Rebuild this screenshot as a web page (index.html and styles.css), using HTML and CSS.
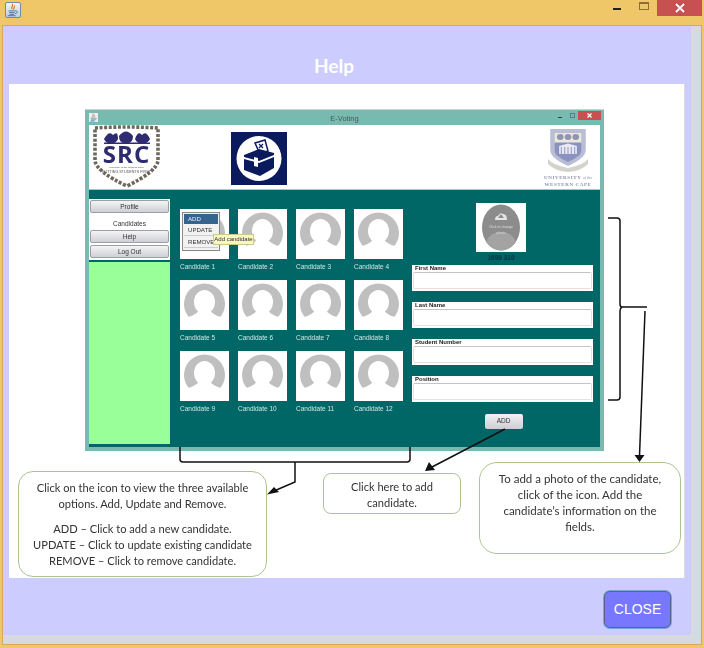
FILE: index.html
```html
<!DOCTYPE html>
<html lang="en">
<head>
<meta charset="utf-8">
<title>Help</title>
<link rel="stylesheet" href="styles.css">
</head>
<body>
<svg class="defs" width="0" height="0" aria-hidden="true">
  <defs>
    <symbol id="person" viewBox="0 0 49 50">
      <circle cx="24.5" cy="24" r="20.5" fill="#bfbfbf"/>
      <ellipse cx="24.5" cy="22" rx="10.500" ry="12" fill="#fff"/>
      <path d="M5 38 C12 36 17 34 19 30 L30 30 C32 34 37 36 44 38 L44 50 L5 50 Z" fill="#fff"/>
    </symbol>
    <symbol id="java" viewBox="0 0 16 16">
      <path d="M7 1 C9 3 5 5 7 7 M9.500 3 C10.500 5 8 6 9 7.500" fill="none" stroke="#e0672a" stroke-width="1.300"/>
      <path d="M3 9 H10 M3.500 11 H10 M4 13 H9 M2 14.500 H11 M10 9 C14 8 14 12 10 12" fill="none" stroke="#3d6a96" stroke-width="1"/>
    </symbol>
  </defs>
</svg>

<header class="titlebar">
  <span class="java-icon"><svg width="14" height="14"><use href="#java"/></svg></span>
  <div class="controls">
    <span class="ctl-min"></span>
    <span class="ctl-max"></span>
    <span class="ctl-close"><svg width="10" height="10" viewBox="0 0 10 10"><path d="M1 1 L9 9 M9 1 L1 9" stroke="#fff" stroke-width="1.800"/></svg></span>
  </div>
</header>

<main class="window">
  <div class="pane">
    <h1 class="heading">Help</h1>
    <section class="image">
      <div class="app">
        <div class="app-titlebar">
          <span class="app-java"><svg width="9" height="9"><use href="#java"/></svg></span>
          <span class="app-title">E-Voting</span>
          <span class="app-min"></span>
          <span class="app-max"></span>
          <span class="app-close"><svg width="5" height="5" viewBox="0 0 10 10"><path d="M1 1 L9 9 M9 1 L1 9" stroke="#fff" stroke-width="2.400"/></svg></span>
        </div>
        <div class="app-header">
          <svg class="logo-src" width="69" height="63" viewBox="0 0 69 63">
            <path d="M3 3 Q34 1 66 3 L66 36 Q64 47 35 61 Q5 47 3 36 Z" fill="#fff" stroke="#6d675c" stroke-width="3.600" stroke-dasharray="3 1.600"/>
            <g fill="#2e2b70">
              <path d="M12 14 Q17 5 21 10 Q26 5 26 14 Q24 19 19 18 Q14 19 12 14 Z"/>
              <path d="M27 11 Q34 2 41 11 Q41 19 34 18 Q27 19 27 11 Z"/>
              <path d="M43 14 Q46 5 50 10 Q54 5 58 14 Q56 19 50 18 Q45 19 43 14 Z"/>
              <rect x="12" y="17.500" width="46" height="1.500"/>
            </g>
            <text class="src-text" x="34.500" y="38" text-anchor="middle">SRC</text>
            <text class="src-small" x="34.500" y="43" text-anchor="middle">University of the Western Cape</text>
            <text class="src-motto" x="34.500" y="47.500" text-anchor="middle">PUTTING STUDENTS FIRST</text>
          </svg>
          <svg class="logo-ballot" width="56" height="53" viewBox="0 0 56 53">
            <rect width="56" height="53" fill="#0a1a5c"/>
            <circle cx="28" cy="26.500" r="22.500" fill="#fff"/>
            <path d="M24 11 L34 8 L37 19 L29 22 Z" fill="#fff" stroke="#0a1a5c" stroke-width="1.500"/>
            <path d="M28 12 L32 16 M32 12 L28 16" stroke="#0a1a5c" stroke-width="1.200"/>
            <path d="M13 23 L28 17 L43 21 L43 23 L28 29 L13 25 Z" fill="#0a1a5c"/>
            <path d="M13 27 L28 31 L43 25 L43 36 L29 44 L13 38 Z" fill="#0a1a5c"/>
            <path d="M23 25 L27 26 L27 35 L23 34 Z" fill="#fff"/>
          </svg>
          <div class="logo-uwc">
            <svg class="uwc-crest" width="40" height="44" viewBox="0 0 36 44" preserveAspectRatio="none">
              <path d="M2 1 H34 V22 Q34 30 18 38 Q2 30 2 22 Z" fill="#b9bdd6"/>
              <rect x="6" y="5" width="24" height="9" fill="#ebe8da"/>
              <circle cx="11" cy="9" r="3" fill="#8f94b3"/>
              <circle cx="18" cy="9" r="3" fill="#8f94b3"/>
              <circle cx="25" cy="9" r="3" fill="#8f94b3"/>
              <path d="M6 15 H30 V23 Q30 28 18 34 Q6 28 6 23 Z" fill="#8a93bf"/>
              <path d="M10 18 L18 15.500 L26 18 V26 H10 Z" fill="#e8e9f2"/>
              <path d="M12 19 V26 M15 19 V26 M18 19 V26 M21 19 V26 M24 19 V26" stroke="#98a0c4"/>
              <path d="M0 31 Q4 37 18 40 Q32 37 36 31 L36 36 Q30 43 18 44 Q6 43 0 36 Z" fill="#d2d3cd"/>
            </svg>
            <span class="uwc-line">UNIVERSITY <i>of the</i></span>
            <span class="uwc-line">WESTERN CAPE</span>
          </div>
        </div>
        <div class="app-body">
          <aside class="sidebar">
            <nav class="menu">
              <span class="menu-btn">Profile</span>
              <span class="menu-active">Candidates</span>
              <span class="menu-btn">Help</span>
              <span class="menu-btn">Log Out</span>
            </nav>
            <div class="side-fill"></div>
          </aside>
          <div class="grid">
            <figure class="cand">
              <div class="thumb"><svg width="49" height="50"><use href="#person"/></svg>
                <div class="popup"><span class="pop-on">ADD</span><span class="pop-item">UPDATE</span><span class="pop-item">REMOVE</span></div>
                <span class="tooltip">Add candidate</span>
              </div>
              <figcaption>Candidate 1</figcaption>
            </figure>
            <figure class="cand"><div class="thumb"><svg width="49" height="50"><use href="#person"/></svg></div><figcaption>Candidate 2</figcaption></figure>
            <figure class="cand"><div class="thumb"><svg width="49" height="50"><use href="#person"/></svg></div><figcaption>Candidate 3</figcaption></figure>
            <figure class="cand"><div class="thumb"><svg width="49" height="50"><use href="#person"/></svg></div><figcaption>Candidate 4</figcaption></figure>
            <figure class="cand"><div class="thumb"><svg width="49" height="50"><use href="#person"/></svg></div><figcaption>Candidate 5</figcaption></figure>
            <figure class="cand"><div class="thumb"><svg width="49" height="50"><use href="#person"/></svg></div><figcaption>Candidate 6</figcaption></figure>
            <figure class="cand"><div class="thumb"><svg width="49" height="50"><use href="#person"/></svg></div><figcaption>Canddate 7</figcaption></figure>
            <figure class="cand"><div class="thumb"><svg width="49" height="50"><use href="#person"/></svg></div><figcaption>Candidate 8</figcaption></figure>
            <figure class="cand"><div class="thumb"><svg width="49" height="50"><use href="#person"/></svg></div><figcaption>Candidate 9</figcaption></figure>
            <figure class="cand"><div class="thumb"><svg width="49" height="50"><use href="#person"/></svg></div><figcaption>Candidate 10</figcaption></figure>
            <figure class="cand"><div class="thumb"><svg width="49" height="50"><use href="#person"/></svg></div><figcaption>Candidate 11</figcaption></figure>
            <figure class="cand"><div class="thumb"><svg width="49" height="50"><use href="#person"/></svg></div><figcaption>Candidate 12</figcaption></figure>
          </div>
          <form class="form">
            <div class="photo">
              <svg width="50" height="49" viewBox="0 0 50 49">
                <ellipse cx="25" cy="24.500" rx="19" ry="23" fill="#8c8c8c"/>
                <path d="M10 39 Q14 29 25 29 Q36 29 40 39 Q33 47.500 25 47.500 Q17 47.500 10 39 Z" fill="#a3a3a3"/>
                <path d="M19 17 Q19 13 22 13 Q24 9 27 11 Q31 11 31 17 Z" fill="#e6e6e6"/>
                <path d="M25 11 L22 15 H28 Z" fill="#8c8c8c"/>
                <text class="photo-text" x="25" y="25" text-anchor="middle">Click to change</text>
                <text class="photo-text" x="25" y="31" text-anchor="middle">photo</text>
              </svg>
            </div>
            <div class="photo-id">1699 310</div>
            <label class="field"><span>First Name</span><i></i></label>
            <label class="field"><span>Last Name</span><i></i></label>
            <label class="field"><span>Student Number</span><i></i></label>
            <label class="field"><span>Position</span><i></i></label>
            <span class="add-btn">ADD</span>
          </form>
        </div>
      </div>

      <div class="callouts">
        <div class="callout c1">
          <p>Click on the icon to view the three available options. Add, Update and Remove.</p>
          <p>ADD – Click to add a new candidate.<br>UPDATE – Click to update existing candidate<br>REMOVE – Click to remove candidate.</p>
        </div>
        <div class="callout c2"><p>Click here to add candidate.</p></div>
        <div class="callout c3"><p>To add a photo of the candidate, click of the icon. Add the candidate’s information on the fields.</p></div>
      </div>

      <svg class="arrows" width="676" height="494" viewBox="0 0 676 494">
        <g transform="translate(-9 -84)" fill="none" stroke="#111" stroke-width="1.500">
          <path d="M608 218 H617 Q620 218 620 221 V304 Q620 307 622 307 H647 M622 307 Q620 308 620 311 V397 Q620 400 617 400 H608"/>
          <path d="M645 311 L639.500 456"/>
          <path d="M180 447 V459 Q180 462 183 462 H407 Q410 462 410 459 V447"/>
          <path d="M295 462 V482 L274 491"/>
          <path d="M505 429 L432 467"/>
          <path d="M634.500 455 H644.500 L639.500 462 Z M274 487 L279 492 L267 494.500 Z M429 462 L435 470 L425 471 Z" fill="#111" stroke="none"/>
        </g>
      </svg>
    </section>
    <footer class="footer"><span class="close-btn">CLOSE</span></footer>
  </div>
</main>
</body>
</html>
```

FILE: styles.css
```css
* { box-sizing: border-box; }
html, body { margin: 0; padding: 0; }
body {
  width: 704px;
  height: 648px;
  overflow: hidden;
  background: #efc668;
  font-family: "Liberation Sans", Arial, sans-serif;
}
.defs { position: absolute; }

/* outer window frame */
.titlebar {
  height: 25px;
  display: flex;
  justify-content: space-between;
  align-items: flex-start;
}
.java-icon {
  margin: 2px 0 0 5px;
  width: 16px;
  height: 16px;
  display: flex;
  align-items: center;
  justify-content: center;
  background: linear-gradient(#f2f5f8, #b9cfe2);
  border: 1px solid #6f8ba5;
  border-radius: 2px;
}
.controls { display: flex; align-items: flex-start; margin-right: 2px; }
.ctl-min { width: 8px; height: 2px; background: #222; margin: 8px 18px 0 0; }
.ctl-max { width: 10px; height: 8px; border: 1px solid #8a6f3e; border-top-width: 2px; margin: 2px 8px 0 0; }
.ctl-close {
  width: 45px;
  height: 16px;
  background: #c75050;
  display: flex;
  align-items: center;
  justify-content: center;
}
.window {
  height: 620px;
  margin: 0 2px 0 2px;
  padding: 1px 10px 10px 1px;
  width: 700px;
  border: 1px solid #d6a95a;
  border-width: 1px 1px 1px 0;
  background: #d6d9e0;
  position: relative;
}
.window::before {
  content: "";
  position: absolute;
  left: 0;
  top: 0;
  bottom: 0;
  width: 1px;
  background: #d6a95a;
}
.pane {
  width: 688px;
  height: 609px;
  margin-top: -1px;
  background: #ccccff;
}
.heading {
  margin: 0;
  height: 58px;
  padding-top: 28px;
  text-align: center;
  color: #fff;
  font: bold 19px/24px "Lato", "Noto Sans", sans-serif;
  transform: translateX(-13px);
}

/* the help picture */
.image {
  position: relative;
  width: 676px;
  height: 494px;
  margin-left: 6px;
  padding-top: 25px;
  background: #fff;
  border-right: 1px solid #dcdce0;
}
.app {
  position: relative;
  margin: 0 0 0 76px;
  width: 519px;
  height: 342px;
  background: #78bab0;
  border-top: 1px solid #c9d4d2;
  padding: 0 4px 4px;
  filter: blur(0.35px);
}
.app-titlebar {
  height: 15px;
  margin: 0 -4px;
  display: flex;
  align-items: flex-start;
  position: relative;
  color: #40605c;
}
.app-java { margin: 3px 0 0 4px; width: 9px; height: 9px; background: #e9eef2; display: flex; }
.app-title { position: absolute; left: 0; right: 0; top: 4px; text-align: center; font-size: 7.500px; line-height: 9px; }
.app-min { margin: 7px 0 0 auto; width: 4px; height: 1px; background: #245; }
.app-max { margin: 3px 0 0 8px; width: 5px; height: 5px; border: 1px solid #557f8c; }
.app-close {
  margin: 1px 3px 0 3px;
  width: 23px;
  height: 9px;
  background: #c75050;
  display: flex;
  align-items: center;
  justify-content: center;
}
.app-header {
  height: 65px;
  background: #fff;
  display: flex;
  align-items: flex-start;
  position: relative;
  border-bottom: 1px solid #9cc;
}
.logo-src { margin: 0 0 0 3px; flex: none; }
.logo-ballot { margin: 7px 0 0 70px; flex: none; }
.src-text { font: bold 24px "Open Sans", sans-serif; fill: #2e2b70; letter-spacing: 1px; }
.src-small { font: 2.500px "Liberation Sans", sans-serif; fill: #444; }
.src-motto { font: 3.700px "Liberation Sans", sans-serif; fill: #555; }
.logo-uwc {
  margin: 3px 6px 0 auto;
  width: 52px;
  display: flex;
  flex-direction: column;
  align-items: center;
}
.uwc-crest { display: block; margin-bottom: 2px; }
.uwc-line {
  font: bold 5px/7px "Liberation Serif", serif;
  letter-spacing: .6px;
  white-space: nowrap;
  color: #8d91aa;
}
.uwc-line i { font-weight: normal; font-size: 4px; letter-spacing: 0; }
.app-body {
  height: 257px;
  background: #006666;
  display: flex;
  padding: 9px 0 3px;
}
.sidebar { width: 81px; display: flex; flex-direction: column; gap: 2px; flex: none; }
.menu {
  height: 61px;
  background: #fff;
  padding: 1px;
  display: flex;
  flex-direction: column;
  font-size: 6.500px;
  color: #333;
  text-align: center;
}
.menu-btn {
  height: 13px;
  margin-bottom: 2px;
  line-height: 12px;
  background: linear-gradient(#f4f4f6, #cfd0d6);
  border: 1px solid #9a9ea6;
  border-radius: 2px;
}
.menu-active { height: 15px; line-height: 17px; }
.side-fill { flex: 1; background: #99ff99; }
.grid {
  margin: 10px 0 0 10px;
  width: 223px;
  flex: none;
  display: grid;
  grid-template-columns: repeat(4, 49px);
  grid-auto-rows: 71px;
  column-gap: 9px;
  align-content: start;
}
.cand { margin: 0; }
.thumb { position: relative; width: 49px; height: 50px; background: #fff; }
.thumb svg { display: block; }
.cand figcaption { margin-top: 3px; font-size: 6.500px; line-height: 9px; color: #d3e6e4; white-space: nowrap; }
.popup {
  position: absolute;
  left: 2px;
  top: 3px;
  width: 38px;
  height: 39px;
  background: #f2f2f2;
  border: 1px solid #888;
  padding: 1px;
  display: flex;
  flex-direction: column;
  font-size: 6.100px;
  color: #333;
}
.popup span { height: 12px; line-height: 11px; padding-left: 4px; }
.popup .pop-on { background: #35658f; color: #e8eef4; height: 10px; line-height: 10px; }
.popup .pop-item { border-bottom: 1px solid #ccc; }
.tooltip {
  position: absolute;
  z-index: 2;
  left: 33px;
  top: 25px;
  width: 41px;
  height: 11px;
  background: #f8f8bb;
  border: 1px solid #c9c98c;
  font-size: 6px;
  line-height: 9px;
  color: #333;
  text-align: center;
  white-space: nowrap;
}
.form {
  margin: 4px 0 0 9px;
  width: 181px;
  flex: none;
  display: flex;
  flex-direction: column;
  align-items: center;
}
.photo { width: 50px; height: 49px; background: #fff; margin-right: 3px; }
.photo svg { display: block; }
.photo-text { font: 3.500px "Liberation Sans", sans-serif; fill: #ddd; }
.photo-id { height: 13px; line-height: 11px; font-size: 6.500px; font-weight: bold; color: #034; margin-right: 3px; }
.field {
  display: block;
  width: 181px;
  height: 26px;
  flex: none;
  margin-bottom: 11px;
  background: #fff;
  font-size: 6px;
  font-weight: bold;
  color: #222;
  padding: 0 1px;
}
.field span { display: block; height: 7px; line-height: 7px; padding-left: 2px; }
.field i {
  display: block;
  height: 17px;
  margin-top: 0;
  border: 1px solid #e2e2e2;
  border-top-color: #c4c4c4;
  border-radius: 2px;
}
.add-btn {
  width: 38px;
  height: 15px;
  line-height: 14px;
  text-align: center;
  margin: 1px 0 0 2px;
  font-size: 6.500px;
  color: #333;
  background: linear-gradient(#f2f2f4, #cdced4);
  border-radius: 2px;
}

/* call-outs under the picture */
.callouts {
  display: flex;
  align-items: flex-start;
  margin: 11px 0 0 9px;
  font: 11.100px/16px "Lato", "Open Sans", sans-serif;
  color: #333;
}
.callout {
  background: #fff;
  border: 1px solid #a9c48f;
  text-align: center;
  flex: none;
  filter: blur(0.2px);
}
.callout p { margin: 0; }
.c1 { width: 249px; height: 106px; margin-top: 9px; border-radius: 15px; padding: 8px 8px 0; }
.c1 p + p { margin-top: 9px; white-space: nowrap; }
.c2 { width: 138px; height: 41px; margin: 11px 0 0 56px; border-radius: 8px; padding: 5px 20px 0; }
.c3 { width: 202px; height: 92px; margin-left: 18px; border-radius: 18px; padding: 8px 16px 0; font-size: 11.500px; }
.arrows { position: absolute; left: 0; top: 0; }

/* bottom bar */
.footer {
  height: 57px;
  padding: 13px 20px 0 0;
  display: flex;
  justify-content: flex-end;
  align-items: flex-start;
}
.close-btn {
  width: 67px;
  height: 37px;
  background: #7777ff;
  border: 1px solid #5a6390;
  box-shadow: 0 0 0 1px #7ba4dc;
  border-radius: 6px;
  color: #fff;
  font-size: 14px;
  line-height: 35px;
  text-align: center;
}
```
